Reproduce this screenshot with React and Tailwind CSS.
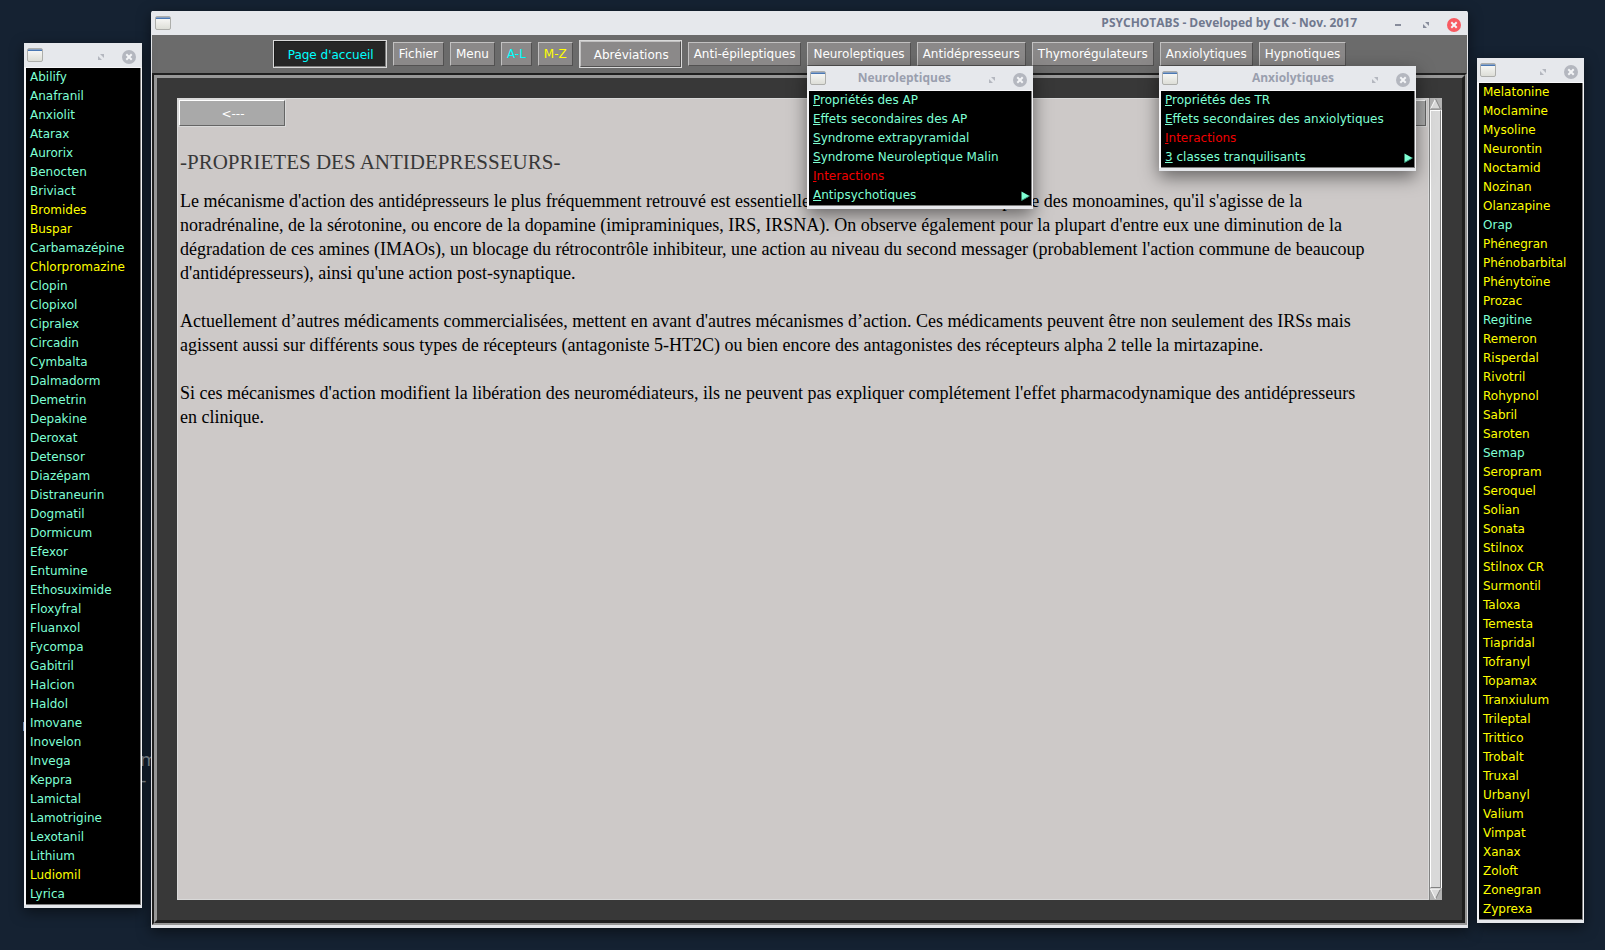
import React from "react";

const LIST_A_L = [
  "Abilify", "Anafranil", "Anxiolit", "Atarax", "Aurorix", "Benocten", "Briviact", "Bromides", "Buspar",
  "Carbamazépine", "Chlorpromazine", "Clopin", "Clopixol", "Cipralex", "Circadin", "Cymbalta", "Dalmadorm",
  "Demetrin", "Depakine", "Deroxat", "Detensor", "Diazépam", "Distraneurin", "Dogmatil", "Dormicum", "Efexor",
  "Entumine", "Ethosuximide", "Floxyfral", "Fluanxol", "Fycompa", "Gabitril", "Halcion", "Haldol", "Imovane",
  "Inovelon", "Invega", "Keppra", "Lamictal", "Lamotrigine", "Lexotanil", "Lithium", "Ludiomil", "Lyrica",
];
const LIST_M_Z = [
  "Melatonine", "Moclamine", "Mysoline", "Neurontin", "Noctamid", "Nozinan", "Olanzapine", "Orap", "Phénegran",
  "Phénobarbital", "Phénytoïne", "Prozac", "Regitine", "Remeron", "Risperdal", "Rivotril", "Rohypnol", "Sabril",
  "Saroten", "Semap", "Seropram", "Seroquel", "Solian", "Sonata", "Stilnox", "Stilnox CR", "Surmontil", "Taloxa",
  "Temesta", "Tiapridal", "Tofranyl", "Topamax", "Tranxiulum", "Trileptal", "Trittico", "Trobalt", "Truxal",
  "Urbanyl", "Valium", "Vimpat", "Xanax", "Zoloft", "Zonegran", "Zyprexa",
];
const YELLOW_A_L = ["Bromides", "Buspar", "Chlorpromazine", "Ludiomil"];
const AQUA_M_Z = ["Orap", "Regitine", "Semap"];

const AQUA = "text-[#7fffd4]";
const YELLOW = "text-[#ffff00]";
const RED = "text-[#f00000]";

function WindowIcon() {
  return (
    <svg width="16" height="14" viewBox="0 0 16 14" className="shrink-0" aria-hidden="true">
      <defs>
        <linearGradient id="pane" x1="0" y1="0" x2="0" y2="1">
          <stop offset="0" stopColor="#fcfcfb" />
          <stop offset="1" stopColor="#dcddd6" />
        </linearGradient>
      </defs>
      <rect x="0.5" y="0.5" width="15" height="13" rx="1.5" fill="url(#pane)" stroke="#adaeab" />
      <rect x="1" y="1" width="14" height="2" fill="#4a78b4" />
      <rect x="1" y="1" width="14" height="0.7" fill="#a5b4c8" />
    </svg>
  );
}

function MaximizeIcon({ color }) {
  return (
    <svg width="6" height="6" viewBox="0 0 6 6" aria-hidden="true" fill={color}>
      <path d="M2 0H6V4Z" />
      <path d="M0 2V6H4Z" />
    </svg>
  );
}

function CloseIcon({ color }) {
  return (
    <svg width="14" height="14" viewBox="0 0 14 14" aria-hidden="true">
      <circle cx="7" cy="7" r="7" fill={color} />
      <path d="M5 5L9 9M9 5L5 9" stroke="#f4f5f7" strokeWidth="2" strokeLinecap="square" />
    </svg>
  );
}

function TitleBar({ title, active }) {
  const glyph = active ? "#878c9b" : "#b4b7bf";
  return (
    <header className="flex h-6 shrink-0 items-center bg-[#e6e8ec] pl-[3px] pr-[6px]">
      <WindowIcon />
      <h2
        className={`ml-auto mr-[38px] whitespace-nowrap font-['Open_Sans',sans-serif] text-xs font-bold ${
          active ? "text-[#70788e]" : "text-[#9a9fae]"
        }`}
      >
        {title}
      </h2>
      <div className="flex items-center pt-1">
        {active && (
          <button aria-label="Réduire" className="mr-[22px] flex h-[14px] items-center">
            <svg width="6" height="2" aria-hidden="true">
              <rect width="6" height="2" fill={glyph} />
            </svg>
          </button>
        )}
        <button aria-label="Agrandir" className="mr-[18px] flex h-[14px] items-center">
          <MaximizeIcon color={glyph} />
        </button>
        <button aria-label="Fermer">
          <CloseIcon color={active ? "#f85a61" : "#b4b7bf"} />
        </button>
      </div>
    </header>
  );
}

function PaletteWindow({ title, label, place, children }) {
  return (
    <section
      aria-label={label}
      className={`absolute rounded-t-[2px] border-b-[3px] border-[#e6e8ec] bg-[#f6f6f8] ${place}`}
    >
      <TitleBar title={title} />
      <div className="ml-[2px] mr-px mt-px border-b border-r border-[#7d7d7d] bg-black">
        <ul>{children}</ul>
      </div>
    </section>
  );
}

function MenuRow({ text, color, mnemonic, submenu }) {
  return (
    <li>
      <button className={`flex h-[19px] w-full items-center pl-1 pr-px text-xs leading-[19px] ${color}`}>
        {mnemonic ? (
          <span className="whitespace-pre">
            <span className="underline decoration-1 underline-offset-1">{text[0]}</span>
            {text.slice(1)}
          </span>
        ) : (
          text
        )}
        {submenu && (
          <svg width="9" height="10" viewBox="0 0 9 10" className="ml-auto" aria-hidden="true">
            <path d="M0.5 0.5L8.5 5L0.5 9.5Z" fill="#7fffd4" />
            <path d="M0.5 9.5L8.5 5" stroke="#3f9f84" fill="none" />
          </svg>
        )}
      </button>
    </li>
  );
}

function BarButton({ children, color = "text-white" }) {
  return (
    <button
      className={`h-6 whitespace-nowrap border border-b-[#525151] border-l-[#c2c1c1] border-r-[#525151] border-t-[#c2c1c1] bg-[#8b8989] px-[5px] pb-px text-xs ${color}`}
    >
      {children}
    </button>
  );
}

function FramedButton({ children, look }) {
  return (
    <span className="flex border border-[#d9d9d9]">
      <button className={`h-[26px] whitespace-nowrap border pl-[13px] pr-[11px] pt-px text-xs ${look}`}>{children}</button>
    </span>
  );
}

function NavButton({ children, label }) {
  return (
    <span className="flex border border-[#d9d9d9]">
      <button
        aria-label={label}
        className="h-[26px] w-[106px] border border-b-[#656565] border-l-white border-r-[#656565] border-t-white bg-[#a9a9a9] pl-[2px] pt-[2px] text-xs text-white"
      >
        {children}
      </button>
    </span>
  );
}

function ScrollBar() {
  return (
    <div className="flex w-[13px] shrink-0 flex-col border-l border-l-[#828282] bg-[#b3b3b3]">
      <button aria-label="Défiler vers le haut" className="h-3">
        <svg width="12" height="12" viewBox="0 0 12 12" aria-hidden="true">
          <path d="M5.5 1L11 11H0.5Z" fill="#d9d9d9" />
          <path d="M0.5 11L5.5 1" stroke="#fff" fill="none" />
          <path d="M5.5 1L10.5 11H0.5" stroke="#828282" fill="none" />
        </svg>
      </button>
      <div className="flex-1 border-r border-r-white">
        <div className="h-full border border-b-[#828282] border-l-white border-r-[#828282] border-t-white bg-[#d9d9d9]" />
      </div>
      <button aria-label="Défiler vers le bas" className="h-3">
        <svg width="12" height="12" viewBox="0 0 12 12" aria-hidden="true">
          <path d="M0.5 1H10.5L5.5 11Z" fill="#d9d9d9" />
          <path d="M10.5 1L5.5 11" stroke="#828282" fill="none" />
          <path d="M10.5 1H0.5L5.5 11" stroke="#fff" fill="none" />
        </svg>
      </button>
    </div>
  );
}

export default function App() {
  return (
    <div className="relative h-screen min-h-[940px] min-w-[1400px] overflow-hidden bg-[#152232] font-['DejaVu_Sans',sans-serif]">
      <div className="absolute left-[140px] top-[750px] text-lg leading-5 text-[#929ca4]" aria-hidden="true">
        m<br />-
      </div>
      <div className="absolute left-[23px] top-[722px] h-[9px] w-px bg-[#8fb4e8]" />

      <main className="absolute bottom-[22px] left-[151px] right-[137px] top-[11px] flex flex-col rounded-t-[2px] border-x border-b-[3px] border-[#e6e8ec] bg-[#6b6b6b] shadow-[0_4px_14px_rgba(0,0,0,0.5)]">
        <TitleBar title="PSYCHOTABS - Developed by CK - Nov. 2017" active />
        <nav className="flex h-[38px] shrink-0 items-center justify-center gap-[6px]">
          <FramedButton look="border-b-[#7f7f7f] border-l-[#1c1c1c] border-r-[#7f7f7f] border-t-[#1c1c1c] bg-[#262626] text-[#00ffff]">
            Page d'accueil
          </FramedButton>
          <BarButton>Fichier</BarButton>
          <BarButton>Menu</BarButton>
          <BarButton color="text-[#00ffff]">A-L</BarButton>
          <BarButton color="text-[#ffff00]">M-Z</BarButton>
          <FramedButton look="border-b-[#525151] border-l-[#c2c1c1] border-r-[#525151] border-t-[#c2c1c1] bg-[#8b8989] text-white">
            Abréviations
          </FramedButton>
          <BarButton>Anti-épileptiques</BarButton>
          <BarButton>Neuroleptiques</BarButton>
          <BarButton>Antidépresseurs</BarButton>
          <BarButton>Thymorégulateurs</BarButton>
          <BarButton>Anxiolytiques</BarButton>
          <BarButton>Hypnotiques</BarButton>
        </nav>
        <div className="flex min-h-0 flex-1 border-2 border-b-[#989898] border-l-[#202020] border-r-[#989898] border-t-[#202020]">
          <div className="flex min-h-0 flex-1 border-[3px] border-b-[#202020] border-l-[#989898] border-r-[#202020] border-t-[#989898] bg-[#383838] p-5">
            <article className="flex-1 overflow-hidden border border-[#d9d9d9] bg-[#cdc9c8]">
              <div className="flex justify-between pr-px">
                <NavButton label="Page précédente">&lt;---</NavButton>
                <NavButton label="Page suivante" />
              </div>
              <div className="whitespace-nowrap pl-[2px] font-['Liberation_Serif',serif] text-lg leading-6 text-black">
                <h1 className="mt-[23px] text-[21px] leading-6 text-[#383838]">-PROPRIETES DES ANTIDEPRESSEURS-</h1>
                <p className="mt-[15px]">
                  Le mécanisme d'action des antidépresseurs le plus fréquemment retrouvé est essentiellement l'inhibition de la
                  recapture des monoamines, qu'il s'agisse de la
                  <br />
                  noradrénaline, de la sérotonine, ou encore de la dopamine (imipraminiques, IRS, IRSNA). On observe également
                  pour la plupart d'entre eux une diminution de la
                  <br />
                  dégradation de ces amines (IMAOs), un blocage du rétrocontrôle inhibiteur, une action au niveau du second
                  messager (probablement l'action commune de beaucoup
                  <br />
                  d'antidépresseurs), ainsi qu'une action post-synaptique.
                </p>
                <p className="mt-6">
                  Actuellement d’autres médicaments commercialisées, mettent en avant d'autres mécanismes d’action. Ces
                  médicaments peuvent être non seulement des IRSs mais
                  <br />
                  agissent aussi sur différents sous types de récepteurs (antagoniste 5-HT2C) ou bien encore des antagonistes
                  des récepteurs alpha 2 telle la mirtazapine.
                </p>
                <p className="mt-6">
                  Si ces mécanismes d'action modifient la libération des neuromédiateurs, ils ne peuvent pas expliquer
                  complétement l'effet pharmacodynamique des antidépresseurs
                  <br />
                  en clinique.
                </p>
              </div>
            </article>
            <ScrollBar />
          </div>
        </div>
      </main>

      <PaletteWindow label="Médicaments A-L" place="left-[24px] top-[43px] w-[118px] shadow-[0_4px_14px_rgba(0,0,0,0.5)]">
        {LIST_A_L.map((name) => (
          <MenuRow key={name} text={name} color={YELLOW_A_L.includes(name) ? YELLOW : AQUA} />
        ))}
      </PaletteWindow>
      <PaletteWindow label="Médicaments M-Z" place="right-[21px] top-[58px] w-[107px] shadow-[0_4px_14px_rgba(0,0,0,0.5)]">
        {LIST_M_Z.map((name) => (
          <MenuRow key={name} text={name} color={AQUA_M_Z.includes(name) ? AQUA : YELLOW} />
        ))}
      </PaletteWindow>

      <PaletteWindow
        title="Neuroleptiques"
        label="Menu Neuroleptiques"
        place="left-[807px] top-[66px] w-[226px] shadow-[0_6px_18px_rgba(0,0,0,0.5)]"
      >
        <MenuRow mnemonic text="Propriétés des AP" color={AQUA} />
        <MenuRow mnemonic text="Effets secondaires des AP" color={AQUA} />
        <MenuRow mnemonic text="Syndrome extrapyramidal" color={AQUA} />
        <MenuRow mnemonic text="Syndrome Neuroleptique Malin" color={AQUA} />
        <MenuRow mnemonic text="Interactions" color={RED} />
        <MenuRow mnemonic text="Antipsychotiques" color={AQUA} submenu />
      </PaletteWindow>
      <PaletteWindow
        title="Anxiolytiques"
        label="Menu Anxiolytiques"
        place="left-[1159px] top-[66px] w-[257px] shadow-[0_6px_18px_rgba(0,0,0,0.5)]"
      >
        <MenuRow mnemonic text="Propriétés des TR" color={AQUA} />
        <MenuRow mnemonic text="Effets secondaires des anxiolytiques" color={AQUA} />
        <MenuRow mnemonic text="Interactions" color={RED} />
        <MenuRow mnemonic text="3 classes tranquilisants" color={AQUA} submenu />
      </PaletteWindow>
    </div>
  );
}
